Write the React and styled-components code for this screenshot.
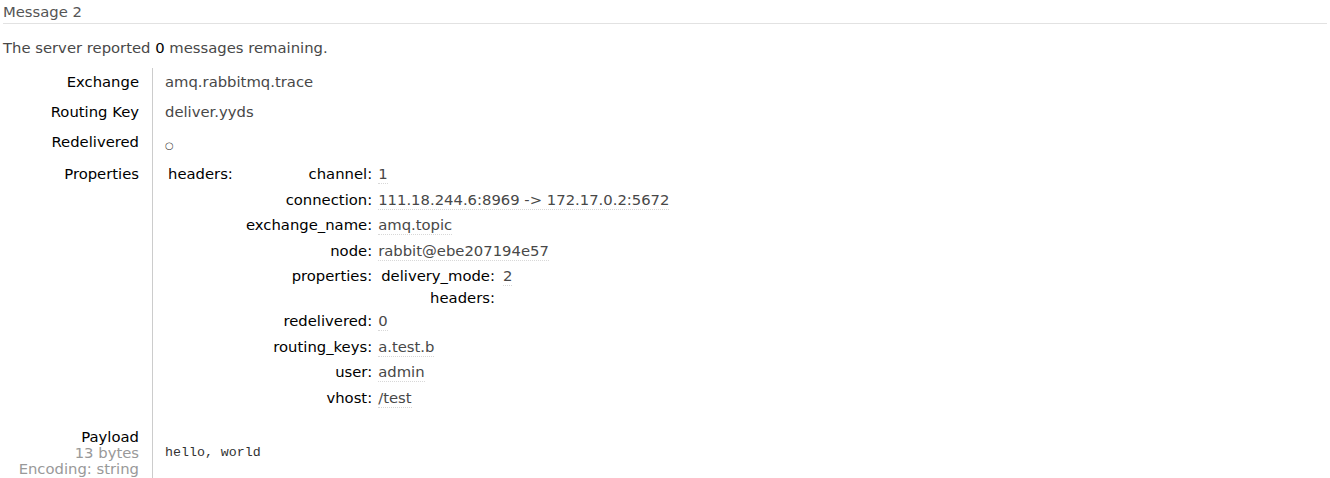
import React from "react";
import styled, { createGlobalStyle } from "styled-components";

const GlobalStyle = createGlobalStyle`
  body {
    margin: 0;
    background: #fff;
    font-family: "DejaVu Sans", Verdana, sans-serif;
    font-size: 14.8px;
    color: #484848;
  }
`;

const Page = styled.div`
  padding: 3px 0 0 3px;
  width: 1327px;
`;

const Heading = styled.h3`
  margin: 0 3px 0 0;
  font-size: 14.8px;
  line-height: 18px;
  font-weight: normal;
  color: #555;
  padding-bottom: 2px;
  border-bottom: 1px solid #e2e2e2;
`;

const Note = styled.p`
  margin: 15px 0 11px;
  line-height: 18px;
  color: #484848;
  b {
    font-weight: normal;
    color: #000;
  }
`;

const Facts = styled.table`
  border-collapse: collapse;
`;

const Label = styled.th`
  width: 136px;
  text-align: right;
  vertical-align: top;
  font-weight: normal;
  color: #000;
  padding: ${(p) => (p.$tall ? "10px 13px 12px 0" : "4px 13px 6px 0")};
  white-space: nowrap;
  line-height: ${(p) => (p.$tall ? "16px" : "20px")};
`;

const Value = styled.td`
  border-left: 1px solid #ccc;
  padding: ${(p) => (p.$payload ? "10px 0 12px 12px" : "4px 0 6px 12px")};
  vertical-align: ${(p) => (p.$payload ? "middle" : "top")};
  line-height: 20px;
`;

const Sub = styled.span`
  display: block;
  color: #999;
  line-height: 15.5px;
`;

const Mini = styled.table`
  border-collapse: collapse;
  margin-left: ${(p) => p.$indent || 0}px;
`;

const MiniKey = styled.th`
  text-align: ${(p) => (p.$left ? "left" : "right")};
  vertical-align: top;
  font-weight: normal;
  color: #000;
  white-space: nowrap;
  line-height: 18px;
  padding: ${(p) => p.$pad || "1px 6px 5.5px 0"};
  width: ${(p) => (p.$w ? `${p.$w}px` : "auto")};
`;

const MiniVal = styled.td`
  vertical-align: top;
  line-height: 18px;
  padding: ${(p) => p.$pad || "1px 0 5.5px 0"};
  white-space: nowrap;
`;

const Typed = styled.span`
  display: inline-block;
  vertical-align: top;
  line-height: 18px;
  border-bottom: 1px dotted #d8d8d8;
`;

const Circle = styled.span`
  font-size: 10px;
  position: relative;
  top: 2px;
  color: #444;
`;

const Pre = styled.pre`
  margin: 0;
  font-family: "Liberation Mono", "DejaVu Sans Mono", monospace;
  font-size: 13.3px;
  color: #333;
`;

const headers = [
  ["channel", "1"],
  ["connection", "111.18.244.6:8969 -> 172.17.0.2:5672"],
  ["exchange_name", "amq.topic"],
  ["node", "rabbit@ebe207194e57"],
  ["properties", null],
  ["redelivered", "0"],
  ["routing_keys", "a.test.b"],
  ["user", "admin"],
  ["vhost", "/test"],
];

function NestedProperties() {
  return (
    <Mini>
      <tbody>
        <tr>
          <MiniKey $pad="1px 8px 4px 3px">delivery_mode:</MiniKey>
          <MiniVal $pad="1px 0 0 0">
            <Typed>2</Typed>
          </MiniVal>
        </tr>
        <tr>
          <MiniKey $pad="0 8px 0 3px">headers:</MiniKey>
          <MiniVal $pad="0"></MiniVal>
        </tr>
      </tbody>
    </Mini>
  );
}

export default function App() {
  return (
    <>
      <GlobalStyle />
      <Page>
        <Heading>Message 2</Heading>
        <Note>
          The server reported <b>0</b> messages remaining.
        </Note>
        <Facts>
          <tbody>
            <tr>
              <Label>Exchange</Label>
              <Value>amq.rabbitmq.trace</Value>
            </tr>
            <tr>
              <Label>Routing Key</Label>
              <Value>deliver.yyds</Value>
            </tr>
            <tr>
              <Label>Redelivered</Label>
              <Value>
                <Circle>○</Circle>
              </Value>
            </tr>
            <tr>
              <Label>Properties</Label>
              <Value>
                <Mini $indent={3}>
                  <tbody>
                    <tr>
                      <MiniKey $left $w={78} $pad="1px 0 0 0">
                        headers:
                      </MiniKey>
                      <MiniVal $pad="0">
                        <Mini>
                          <tbody>
                            {headers.map(([k, v]) => (
                              <tr key={k}>
                                <MiniKey>{k}:</MiniKey>
                                {v === null ? (
                                  <MiniVal $pad="0 0 4px 0">
                                    <NestedProperties />
                                  </MiniVal>
                                ) : (
                                  <MiniVal>
                                    <Typed>{v}</Typed>
                                  </MiniVal>
                                )}
                              </tr>
                            ))}
                          </tbody>
                        </Mini>
                      </MiniVal>
                    </tr>
                  </tbody>
                </Mini>
              </Value>
            </tr>
            <tr>
              <Label $tall>
                Payload
                <Sub>13 bytes</Sub>
                <Sub>Encoding: string</Sub>
              </Label>
              <Value $payload>
                <Pre>hello, world</Pre>
              </Value>
            </tr>
          </tbody>
        </Facts>
      </Page>
    </>
  );
}
